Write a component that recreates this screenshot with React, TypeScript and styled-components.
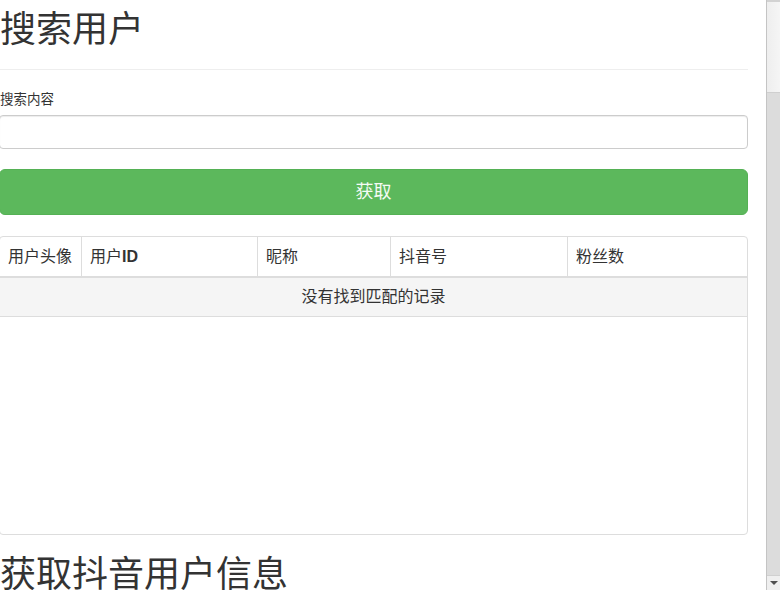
import React from "react";
import styled, { createGlobalStyle } from "styled-components";

const GlobalStyle = createGlobalStyle`
  html, body {
    margin: 0;
    padding: 0;
    background: #fff;
    overflow: hidden;
  }
  body {
    font-family: "Liberation Sans", "Noto Sans CJK SC", sans-serif;
    color: #333;
  }
  * { box-sizing: border-box; }
`;

const Viewport = styled.div`
  display: flex;
  width: 780px;
  height: 590px;
  overflow: hidden;
  background: #fff;
`;

const Main = styled.main`
  flex: 1;
  min-width: 0;
  overflow: hidden;
  padding-right: 18px;
`;

const Content = styled.div`
  margin-left: -1px;
`;

const PageHeader = styled.div`
  padding-bottom: 9px;
  margin-bottom: 20px;
  border-bottom: 1px solid #eee;
`;

const Title = styled.h1<{ $top?: number }>`
  margin: ${(p) => p.$top ?? 10}px 0 10px 1px;
  font-size: 36px;
  font-weight: 400;
  line-height: 1.1;
  color: #333;
  white-space: nowrap;
`;

const FormGroup = styled.div`
  margin-bottom: 20px;
`;

const Label = styled.label`
  display: block;
  margin: 0 0 5px 1px;
  font-size: 13.5px;
  line-height: 20px;
  color: #333;
`;

const Input = styled.input`
  display: block;
  width: 100%;
  height: 34px;
  padding: 6px 12px;
  font-size: 14px;
  color: #555;
  background: #fff;
  border: 1px solid #ccc;
  border-radius: 4px;
  box-shadow: inset 0 1px 1px rgba(0, 0, 0, 0.075);
  outline: none;
`;

const Button = styled.button`
  display: block;
  width: 100%;
  height: 46px;
  padding: 10px 16px;
  font-family: inherit;
  font-size: 18px;
  line-height: 24px;
  color: #f4fbf4;
  background: #5cb85c;
  border: 1px solid #55b155;
  border-radius: 6px;
  cursor: pointer;
`;

const TableBox = styled.div`
  margin-top: 21px;
  height: 299px;
  border: 1px solid #ddd;
  border-radius: 4px;
  overflow: hidden;
`;

const Table = styled.table`
  width: 100%;
  table-layout: fixed;
  border-collapse: separate;
  border-spacing: 0;
  font-size: 16px;
  line-height: 22px;
  color: #333;
`;

const Th = styled.th<{ $first?: boolean }>`
  padding: 9px 8px 8px;
  text-align: left;
  font-weight: normal;
  white-space: nowrap;
  border-bottom: 2px solid #ddd;
  border-left: ${(p) => (p.$first ? "none" : "1px solid #ddd")};
`;

const Strong = styled.span`
  font-weight: bold;
`;

const EmptyCell = styled.td`
  padding: 8px;
  text-align: center;
  background: #f5f5f5;
  border-bottom: 1px solid #ddd;
`;

const ScrollRail = styled.aside`
  width: 14px;
  flex: none;
  display: flex;
  flex-direction: column;
  border-left: 1px solid #c4c4c4;
  background: #dcdcdc;
`;

const Thumb = styled.div`
  height: 93px;
  background: linear-gradient(to right, #eeeeee, #f5f5f5);
  border-top: 2px solid #d2d2d2;
  border-bottom: 1px solid #cfcfcf;
`;

const Track = styled.div`
  flex: 1;
  background: #dcdcdc;
`;

const ArrowButton = styled.div`
  height: 15px;
  display: flex;
  align-items: center;
  justify-content: center;
  background: #efefef;
  border-top: 1px solid #d0d0d0;
`;

const ArrowDown = styled.span`
  width: 0;
  height: 0;
  border-left: 4px solid transparent;
  border-right: 4px solid transparent;
  border-top: 4px solid #505050;
`;

const columns = [81, 176, 133, 177, 180];

export default function App() {
  return (
    <>
      <GlobalStyle />
      <Viewport>
        <Main>
          <Content>
            <PageHeader>
              <Title>搜索用户</Title>
            </PageHeader>
            <FormGroup>
              <Label htmlFor="q">搜索内容</Label>
              <Input id="q" type="text" />
            </FormGroup>
            <Button type="button">获取</Button>
            <TableBox>
              <Table>
                <colgroup>
                  {columns.map((w, i) => (
                    <col key={i} style={{ width: w }} />
                  ))}
                </colgroup>
                <thead>
                  <tr>
                    <Th $first>用户头像</Th>
                    <Th>
                      用户<Strong>ID</Strong>
                    </Th>
                    <Th>昵称</Th>
                    <Th>抖音号</Th>
                    <Th>粉丝数</Th>
                  </tr>
                </thead>
                <tbody>
                  <tr>
                    <EmptyCell colSpan={5}>没有找到匹配的记录</EmptyCell>
                  </tr>
                </tbody>
              </Table>
            </TableBox>
            <Title $top={20}>获取抖音用户信息</Title>
          </Content>
        </Main>
        <ScrollRail>
          <Thumb />
          <Track />
          <ArrowButton>
            <ArrowDown />
          </ArrowButton>
        </ScrollRail>
      </Viewport>
    </>
  );
}
